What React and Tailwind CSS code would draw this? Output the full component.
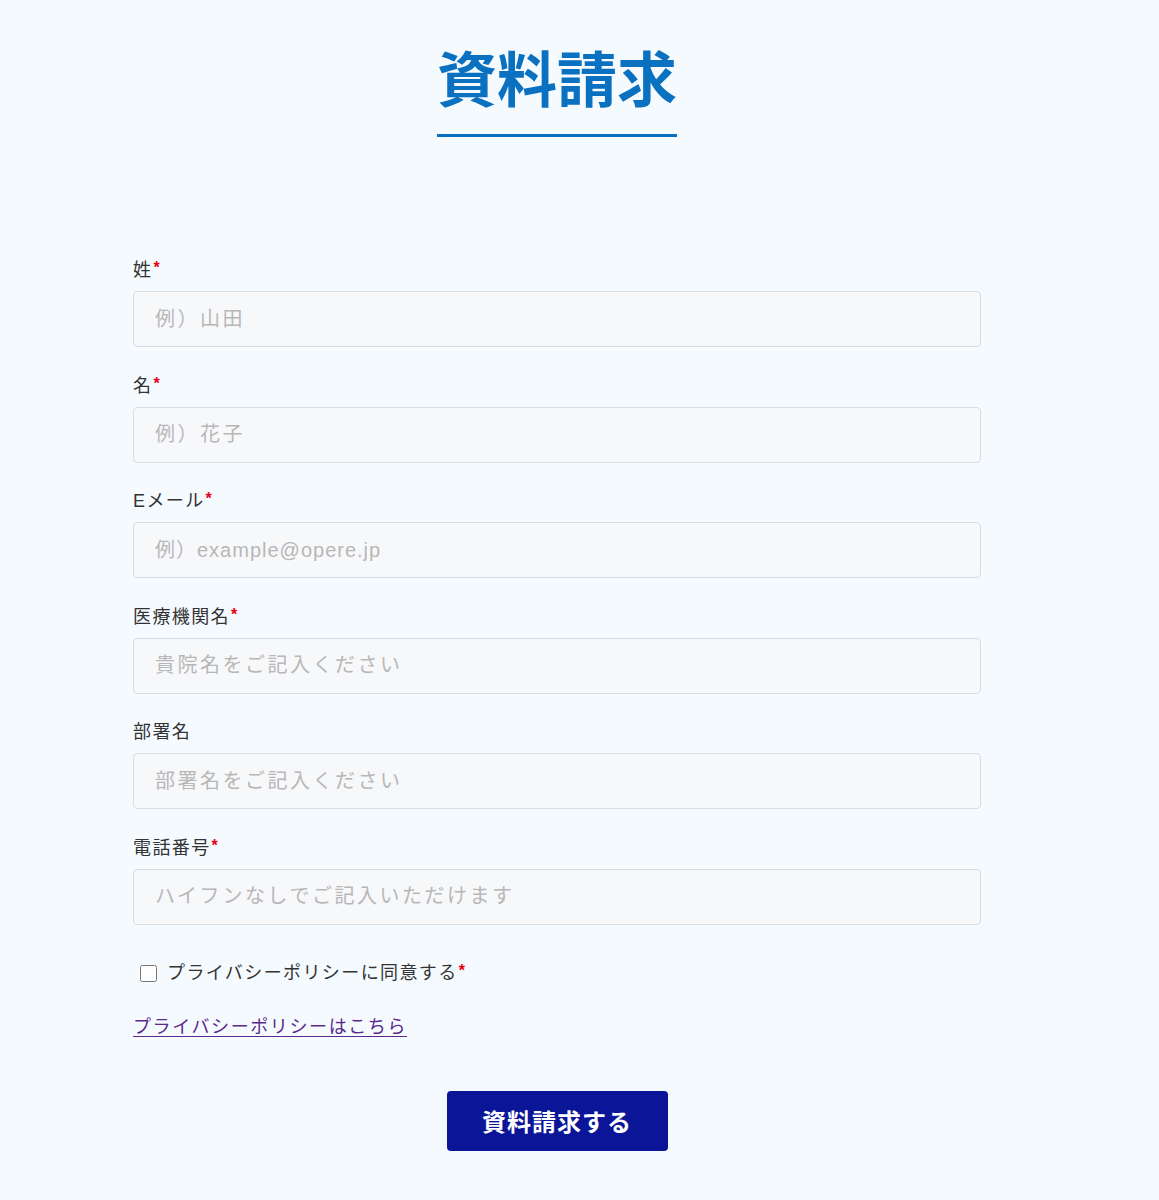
import React, { useState } from "react";

const fields = [
  { label: "姓", placeholder: "例）山田", required: true },
  { label: "名", placeholder: "例）花子", required: true },
  { label: "Eメール", placeholder: "例）example@opere.jp", required: true, tight: true },
  { label: "医療機関名", placeholder: "貴院名をご記入ください", required: true },
  { label: "部署名", placeholder: "部署名をご記入ください", required: false },
  { label: "電話番号", placeholder: "ハイフンなしでご記入いただけます", required: true },
];

const Star = () => (
  <span className="text-[16px] font-bold text-[#e60012] align-top relative top-[-3px] ml-[1px]">*</span>
);

const App = () => {
  const [agree, setAgree] = useState(false);

  return (
    <div className="min-h-[1200px] bg-[#f5faff] font-['Liberation_Sans','Noto_Sans_CJK_JP',sans-serif] text-[#333]">
      <div className="w-[848px] ml-[133px] pt-[40px]">
        <div className="flex justify-center">
          <h1 className="font-['Noto_Sans_CJK_JP',sans-serif] text-[60px] leading-[72px] font-bold text-[#0a70c0] border-b-[3px] border-[#0a70c0] pb-[22px]">
            資料請求
          </h1>
        </div>

        <form className="mt-[120px]" onSubmit={(e) => e.preventDefault()}>
          {fields.map((f) => (
            <div key={f.label} className="mb-[25.5px]">
              <label className="block text-[18px] leading-[27px] tracking-[1.4px] mb-[7px]">
                {f.label}
                {f.required && <Star />}
              </label>
              <input
                type="text"
                placeholder={f.placeholder}
                className={
                  "block w-full h-[56px] px-[21px] text-[20px] bg-[#f7f8fa] border border-[#d9dde2] rounded-[4px] placeholder:text-[#b7b7b7] outline-none " +
                  (f.tight ? "tracking-[1px]" : "tracking-[2.5px]")
                }
              />
            </div>
          ))}

          <label className="flex items-center pl-[7px] mt-[35px] text-[18px] leading-[27px] tracking-[1.4px]">
            <input
              type="checkbox"
              checked={agree}
              onChange={() => setAgree(!agree)}
              className="w-[17px] h-[17px] m-0 mr-[10px]"
            />
            プライバシーポリシーに同意する
            <Star />
          </label>

          <div className="mt-[27px] text-[18px] leading-[27px] tracking-[1.6px]">
            <a href="#" className="text-[#5a2a8e] underline underline-offset-[3px]">
              プライバシーポリシーはこちら
            </a>
          </div>

          <div className="flex justify-center mt-[50px]">
            <button
              type="submit"
              className="w-[221px] h-[60px] bg-[#0b1597] text-white text-[24px] tracking-[1px] font-bold rounded-[4px] font-['Noto_Sans_CJK_JP',sans-serif]"
            >
              資料請求する
            </button>
          </div>
        </form>
      </div>
    </div>
  );
};

export default App;
